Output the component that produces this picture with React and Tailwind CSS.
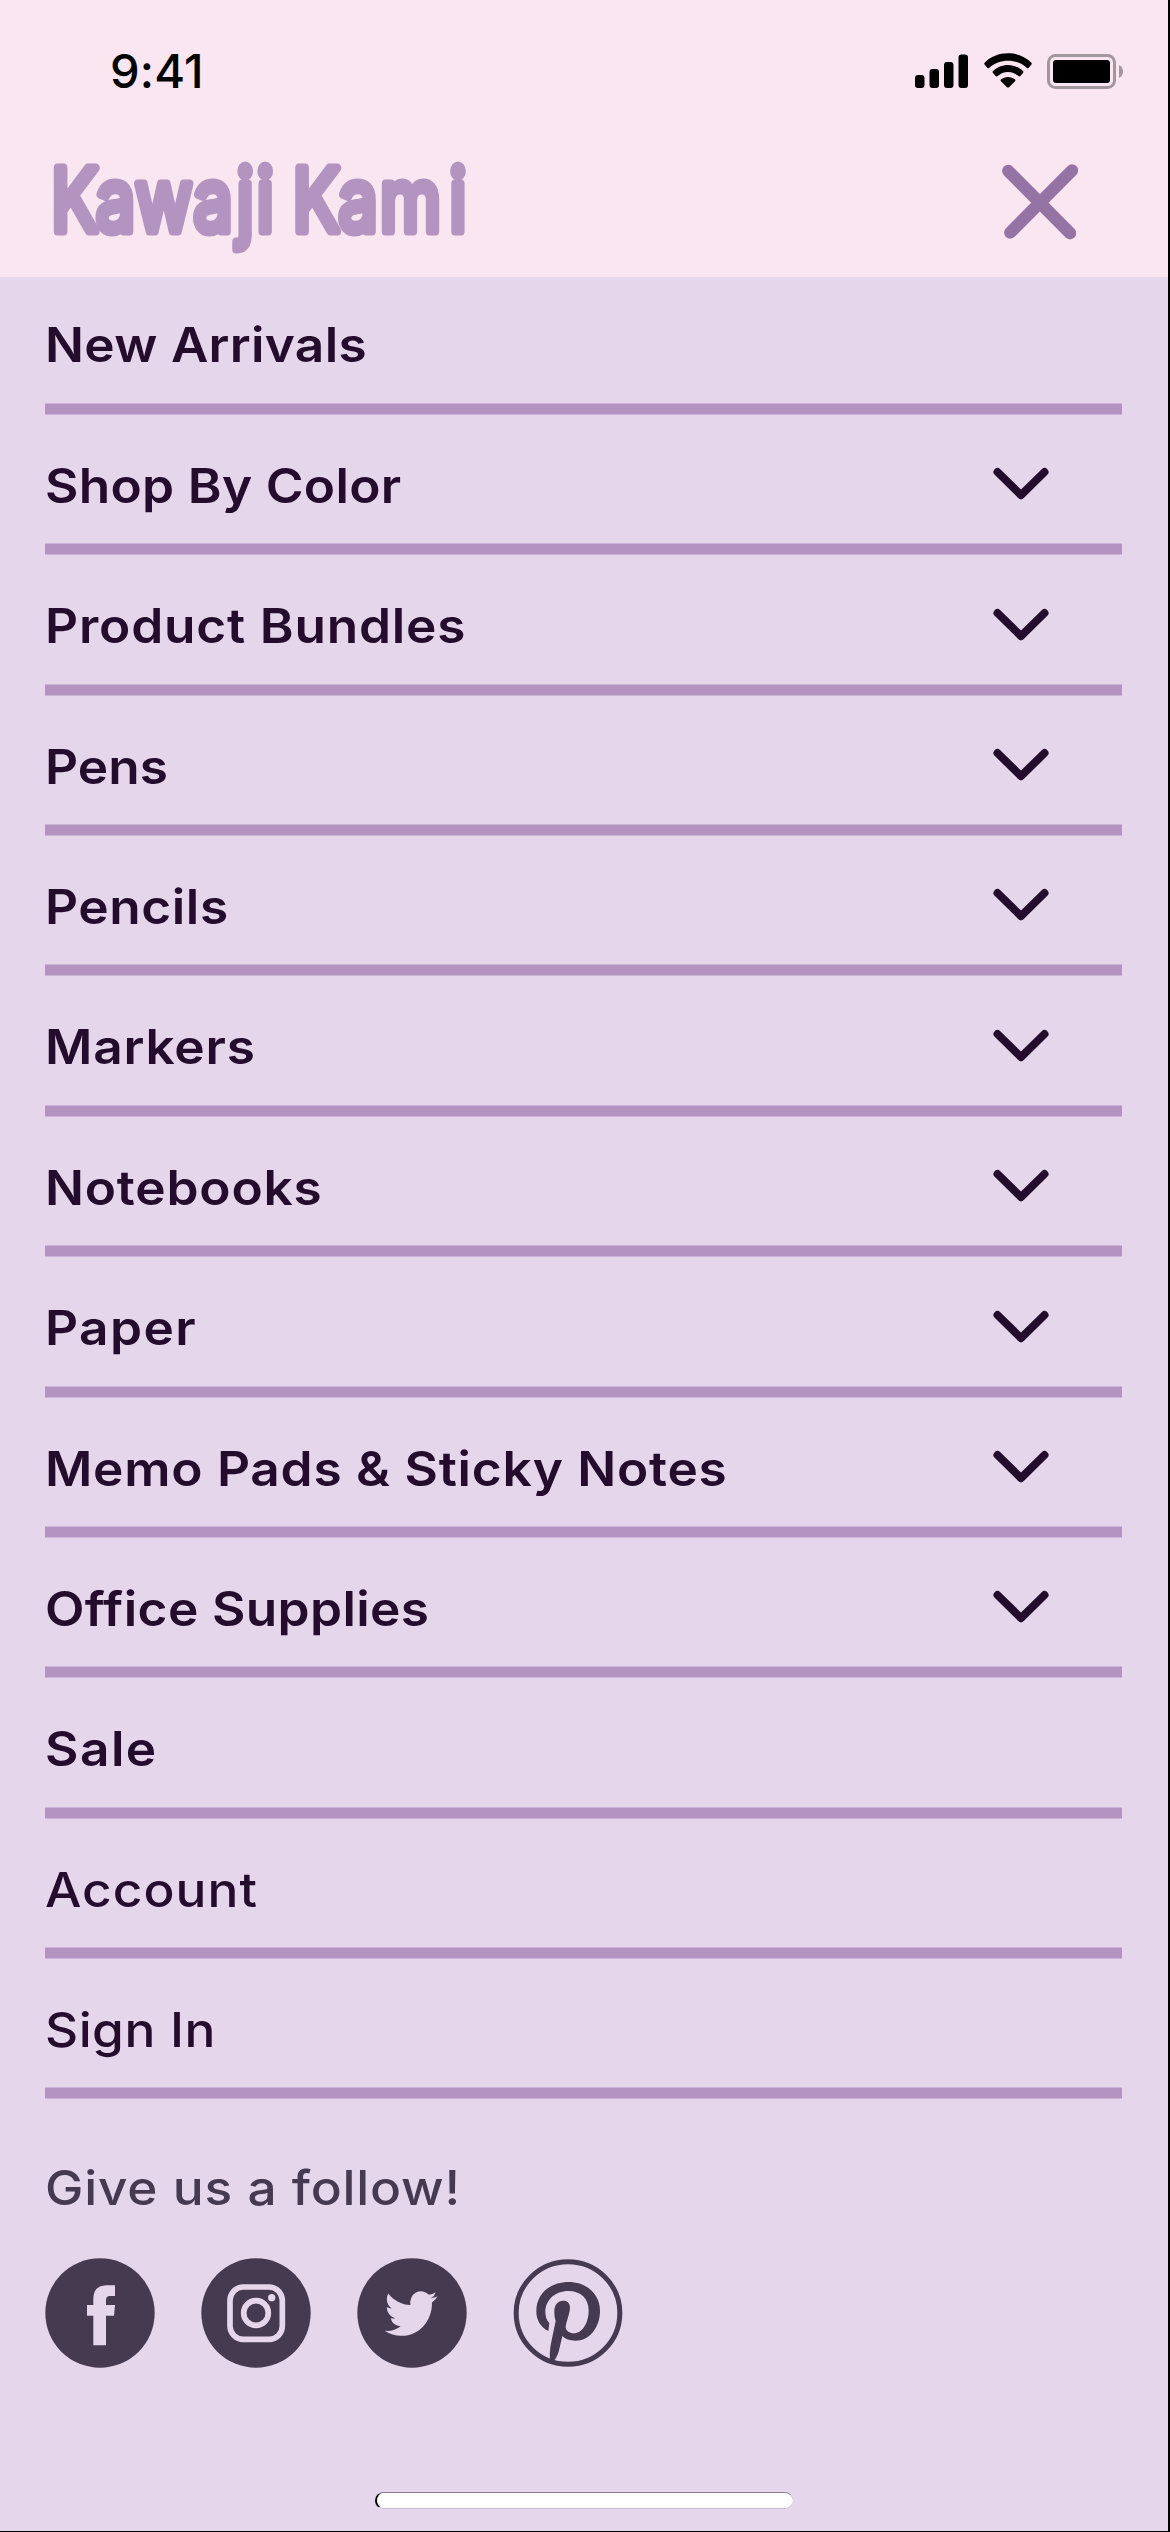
const MENU = [
  { label: "New Arrivals", style: "font-semibold tracking-[0.3px]" },
  { label: "Shop By Color", style: "font-semibold tracking-[0.3px]", expandable: true },
  { label: "Product Bundles", style: "font-semibold tracking-[0.77px]", expandable: true },
  { label: "Pens", style: "font-semibold tracking-[0.1px]", expandable: true },
  { label: "Pencils", style: "font-semibold tracking-[0.55px]", expandable: true },
  { label: "Markers", style: "font-semibold tracking-[0.75px]", expandable: true },
  { label: "Notebooks", style: "font-semibold tracking-[0.75px]", expandable: true },
  { label: "Paper", style: "font-semibold tracking-[1.35px]", expandable: true },
  { label: "Memo Pads & Sticky Notes", style: "font-semibold tracking-[0.7px]", expandable: true },
  { label: "Office Supplies", style: "font-semibold tracking-[0.36px]", expandable: true },
  { label: "Sale", style: "font-semibold tracking-[1.4px]" },
  { label: "Account", style: "font-medium tracking-[1px]" },
  { label: "Sign In", style: "font-medium tracking-[0.45px]" },
];

function SignalIcon() {
  return (
    <svg width="54" height="35" viewBox="0 0 54 35" className="fill-black">
      <rect x="0" y="21" width="9.5" height="13" rx="3" />
      <rect x="14.5" y="15" width="9.5" height="19" rx="3" />
      <rect x="29" y="8" width="9.5" height="26" rx="3" />
      <rect x="43.5" y="0.5" width="9.5" height="33.5" rx="3" />
    </svg>
  );
}

function WifiIcon() {
  return (
    <svg width="48" height="35" viewBox="0 0 144 105" className="fill-black">
      <path d="M72 1C99 1 124 11 142 29C144 31 144 33 142 35L134 44C132 46 130 46 128 44C113 30 93 23 72 23C51 23 31 30 16 44C14 46 12 46 10 44L2 35C0 33 0 31 2 29C20 11 45 1 72 1Z" />
      <path d="M72 36C89 36 105 43 117 54C119 56 119 58 117 60L109 69C107 71 105 71 103 69C95 62 84 57 72 57C60 57 49 62 41 69C39 71 37 71 35 69L27 60C25 58 25 56 27 54C39 43 55 36 72 36Z" />
      <path d="M72 72C80 72 87 75 93 79C95 81 95 83 93 85L75 103C73 105 71 105 69 103L51 85C49 83 49 81 51 79C57 75 64 72 72 72Z" />
    </svg>
  );
}

function BatteryIcon() {
  return (
    <svg width="76" height="36" viewBox="0 0 76 36">
      <rect x="1.5" y="1.5" width="66" height="32" rx="7" fill="none" stroke="#a3969d" strokeWidth="3" />
      <rect x="6" y="6" width="57" height="23" rx="3" fill="#000" />
      <path d="M72 11C75 12.5 76 15 76 17.5C76 20 75 22.5 72 24Z" fill="#a3969d" />
    </svg>
  );
}

function Logo() {
  return (
    <svg width="460" height="132" viewBox="0 0 460 132" className="overflow-visible" role="img" aria-label="Kawaji Kami">
      <g transform="scale(0.8 1)">
        <text
          x="14 70 119 192 246 271 288 316 373 425 512"
          y="91"
          fill="#b394c1"
          stroke="#b394c1"
          strokeWidth="9"
          strokeLinejoin="round"
          strokeLinecap="round"
          className="font-['Inter'] text-[87px] font-normal"
        >
          Kawaji Kami
        </text>
      </g>
    </svg>
  );
}

function CloseIcon() {
  return (
    <svg width="78" height="78" viewBox="0 0 78 78" fill="none" stroke="#9673a5" strokeWidth="12.4" strokeLinecap="round">
      <path d="M8.3 9L70 71.2M72 8.5L10.3 70.5" />
    </svg>
  );
}

function ChevronIcon() {
  return (
    <svg width="56" height="34" viewBox="0 0 56 34" className="mr-[73px] mb-[3px]" fill="none" stroke="#230c2c" strokeWidth="8" strokeLinecap="round" strokeLinejoin="round">
      <path d="M4.5 5L28 28.2L51.5 5" />
    </svg>
  );
}

function FacebookIcon() {
  return (
    <svg width="110" height="110" viewBox="0 0 330 330">
      <circle cx="165" cy="165" r="164" fill="#453a50" />
      <path fill="#e6d6ec" d="M145 262V173H126V141H145V124C145 94 160 82 186 82H210V114H195C186 114 183 118 183 127V141H210L207 173H183V262Z" />
    </svg>
  );
}

function InstagramIcon() {
  return (
    <svg width="110" height="110" viewBox="0 0 330 330">
      <circle cx="165" cy="165" r="164" fill="#453a50" />
      <rect x="87" y="87" width="157" height="157" rx="40" fill="none" stroke="#e6d6ec" strokeWidth="17" />
      <circle cx="165" cy="165" r="37" fill="none" stroke="#e6d6ec" strokeWidth="17" />
      <circle cx="212" cy="119" r="11" fill="#e6d6ec" />
    </svg>
  );
}

function TwitterIcon() {
  return (
    <svg width="110" height="110" viewBox="0 0 330 330">
      <circle cx="165" cy="165" r="164" fill="#453a50" />
      <path
        transform="translate(83 84.5) scale(6.58 6.85)"
        fill="#e6d6ec"
        d="M23.953 4.57a10 10 0 01-2.825.775 4.958 4.958 0 002.163-2.723c-.951.555-2.005.959-3.127 1.184a4.92 4.92 0 00-8.384 4.482C7.69 8.095 4.067 6.13 1.64 3.162a4.822 4.822 0 00-.666 2.475c0 1.71.87 3.213 2.188 4.096a4.904 4.904 0 01-2.228-.616v.06a4.923 4.923 0 003.946 4.827 4.996 4.996 0 01-2.212.085 4.936 4.936 0 004.604 3.417 9.867 9.867 0 01-6.102 2.105c-.39 0-.779-.023-1.17-.067a13.995 13.995 0 007.557 2.209c9.053 0 13.998-7.496 13.998-13.985 0-.21 0-.42-.015-.63A9.935 9.935 0 0024 4.59z"
      />
    </svg>
  );
}

function PinterestIcon() {
  return (
    <svg width="110" height="110" viewBox="518 54 330 330">
      <ellipse cx="683" cy="219" rx="155.5" ry="154" fill="none" stroke="#453a50" strokeWidth="15" />
      <path
        fill="#453a50"
        d="M624 273C600 262 588 240 588 214C588 160 630 126 685 126C740 126 779 163 779 212C779 262 748 302 705 302C688 302 674 297 666 288L655 335C652 347 645 356 641 363L629 359C627 340 630 320 633 305L646 243C643 235 642 225 642 214C642 195 652 182 669 182C682 182 689 190 689 203C689 220 676 248 676 262C677 273 688 280 700 280C727 280 745 248 745 211C745 176 722 153 684 153C644 153 615 180 615 217C615 230 619 241 627 250Z"
      />
    </svg>
  );
}

export default function App() {
  return (
    <div className="flex h-[2532px] w-[1170px] flex-col overflow-hidden border-r-2 border-b border-black bg-[#e6d6ec] font-['Inter',sans-serif] text-[#230c2c]">
      <header className="h-[277px] shrink-0 bg-[#fae6f0]">
        <div className="flex h-[140px] items-start justify-between pt-[54px] pr-[45px] pl-[110px]">
          <span className="-mt-[11px] text-[47px] leading-[56px] font-medium tracking-[0.2px] text-black">9:41</span>
          <div className="flex items-start">
            <SignalIcon />
            <div className="-mt-px ml-[14.5px]">
              <WifiIcon />
            </div>
            <div className="ml-[15.5px]">
              <BatteryIcon />
            </div>
          </div>
        </div>
        <div className="flex items-start justify-between pr-[90px] pl-[40px]">
          <Logo />
          <button aria-label="Close menu" className="pt-[22px]">
            <CloseIcon />
          </button>
        </div>
      </header>

      <ul className="pr-[46px] pl-[45px]">
        {MENU.map((item) => (
          <li key={item.label} className="h-[140.4px]">
            <div className="flex h-[125.8px] items-center justify-between pt-[11px]">
              <span className={"origin-left scale-x-[1.07] text-[48px] leading-[60px] whitespace-nowrap " + item.style}>{item.label}</span>
              {item.expandable && <ChevronIcon />}
            </div>
            <div className="h-[12px] border-y border-[#ccb5d9] bg-[#b394c1]" />
          </li>
        ))}
      </ul>

      <footer className="flex flex-1 flex-col pl-[45px] text-[#453a50]">
        <p className="mt-[56px] origin-left scale-x-[1.07] self-start text-[48px] leading-[60px] font-medium tracking-[0.75px]">Give us a follow!</p>
        <div className="mt-[40px] flex gap-[46px]">
          <FacebookIcon />
          <InstagramIcon />
          <TwitterIcon />
          <PinterestIcon />
        </div>
        <div className="mt-[124px] ml-[330px] h-[17px] w-[418px] rounded-full border-t border-b border-l-2 border-t-[#8b7a92] border-b-[#cdbfd3] border-l-black bg-white" />
      </footer>
    </div>
  );
}
